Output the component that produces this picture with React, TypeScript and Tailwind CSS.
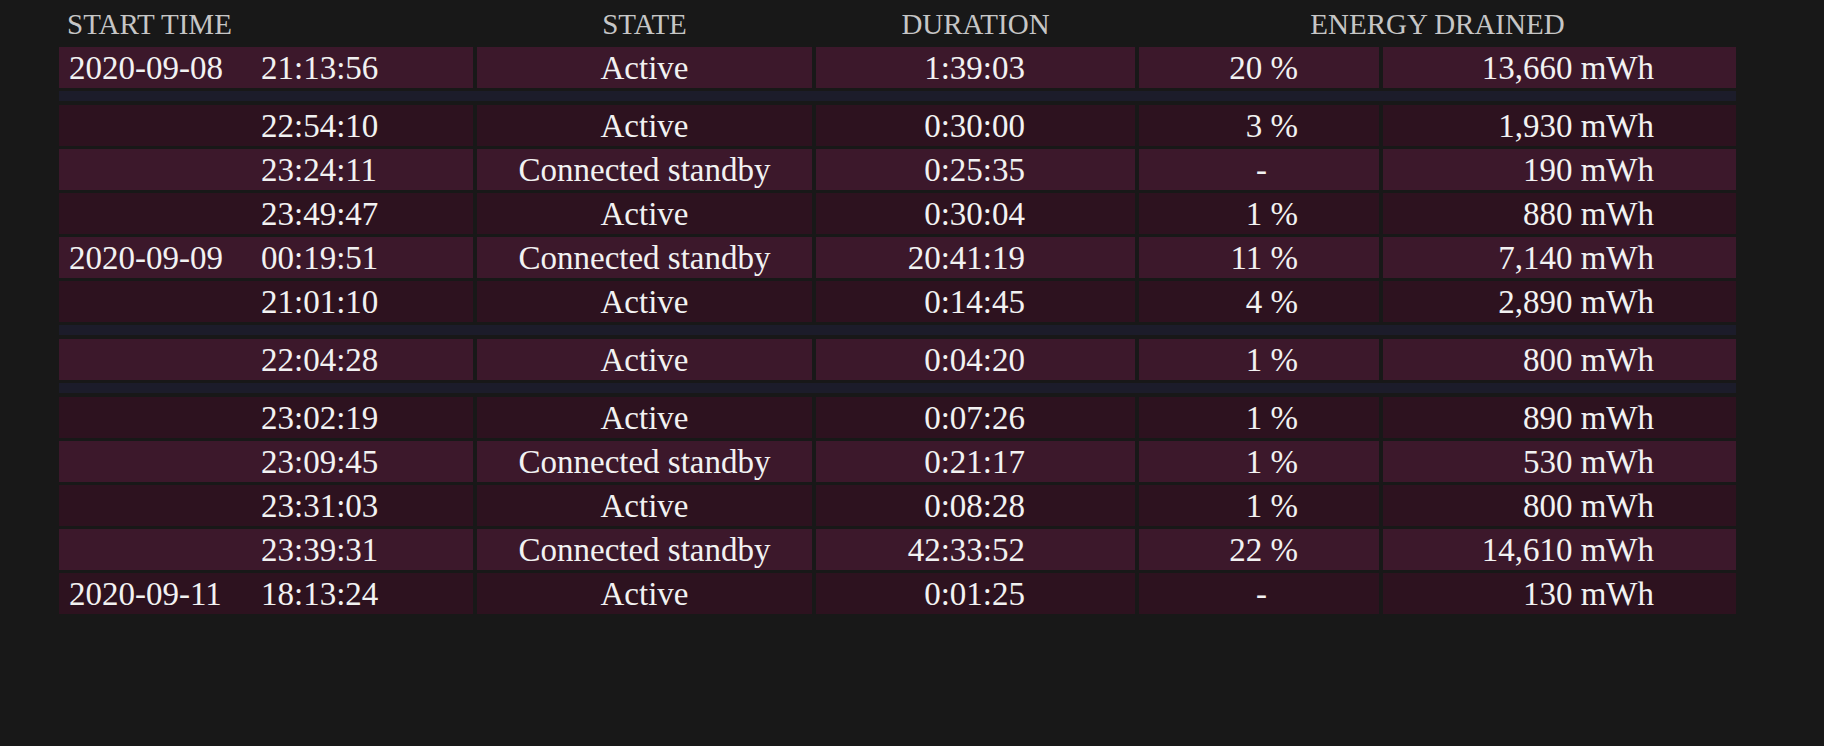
import React from "react";

type Row = { d: string; t: string; s: string; dur: string; p: string; e: string } | "sep";

const rows: Row[] = [
  { d: "2020-09-08", t: "21:13:56", s: "Active", dur: "1:39:03", p: "20 %", e: "13,660 mWh" },
  "sep",
  { d: "", t: "22:54:10", s: "Active", dur: "0:30:00", p: "3 %", e: "1,930 mWh" },
  { d: "", t: "23:24:11", s: "Connected standby", dur: "0:25:35", p: "-", e: "190 mWh" },
  { d: "", t: "23:49:47", s: "Active", dur: "0:30:04", p: "1 %", e: "880 mWh" },
  { d: "2020-09-09", t: "00:19:51", s: "Connected standby", dur: "20:41:19", p: "11 %", e: "7,140 mWh" },
  { d: "", t: "21:01:10", s: "Active", dur: "0:14:45", p: "4 %", e: "2,890 mWh" },
  "sep",
  { d: "", t: "22:04:28", s: "Active", dur: "0:04:20", p: "1 %", e: "800 mWh" },
  "sep",
  { d: "", t: "23:02:19", s: "Active", dur: "0:07:26", p: "1 %", e: "890 mWh" },
  { d: "", t: "23:09:45", s: "Connected standby", dur: "0:21:17", p: "1 %", e: "530 mWh" },
  { d: "", t: "23:31:03", s: "Active", dur: "0:08:28", p: "1 %", e: "800 mWh" },
  { d: "", t: "23:39:31", s: "Connected standby", dur: "42:33:52", p: "22 %", e: "14,610 mWh" },
  { d: "2020-09-11", t: "18:13:24", s: "Active", dur: "0:01:25", p: "-", e: "130 mWh" },
];

const grid = "grid grid-cols-[414px_335px_319px_240px_353px] gap-x-[4px]";

export default function App() {
  let idx = 0;
  return (
    <div className="w-full h-[746px] bg-[#181818] font-[Liberation_Serif,serif] pl-[59px]">
      <div className="w-[1677px] flex flex-col">
        <div className={`${grid} h-[43px] pt-[8px] leading-[32px] text-[29px] text-[#c6c6c6]`}>
          <div className="pl-[8px]">START TIME</div>
          <div className="text-center">STATE</div>
          <div className="text-center">DURATION</div>
          <div className="col-span-2 text-center">ENERGY DRAINED</div>
        </div>
        <div className="mt-[4px] flex flex-col gap-y-[4px] text-[33px] leading-[40px] text-[#f2f2f2]">
          {rows.map((r, i) => {
            if (r === "sep") {
              return <div key={i} className="h-[10px] bg-[#1c1c2a]" />;
            }
            const light = idx % 2 === 0;
            idx++;
            const bg = light ? "bg-[#3c182b]" : "bg-[#2d121f]";
            return (
              <div key={i} className={`${grid} h-[40px]`}>
                <div className={`${bg} flex pl-[10px] pt-[1px]`}>
                  <span className="w-[192px]">{r.d}</span>
                  <span>{r.t}</span>
                </div>
                <div className={`${bg} text-center pt-[1px]`}>{r.s}</div>
                <div className={`${bg} text-right pr-[110px] pt-[1px]`}>{r.dur}</div>
                {r.p === "-" ? (
                  <div className={`${bg} text-center pl-[5px] pt-[1px]`}>-</div>
                ) : (
                  <div className={`${bg} text-right pr-[81px] pt-[1px]`}>{r.p}</div>
                )}
                <div className={`${bg} text-right pr-[82px] pt-[1px]`}>{r.e}</div>
              </div>
            );
          })}
        </div>
      </div>
    </div>
  );
}
